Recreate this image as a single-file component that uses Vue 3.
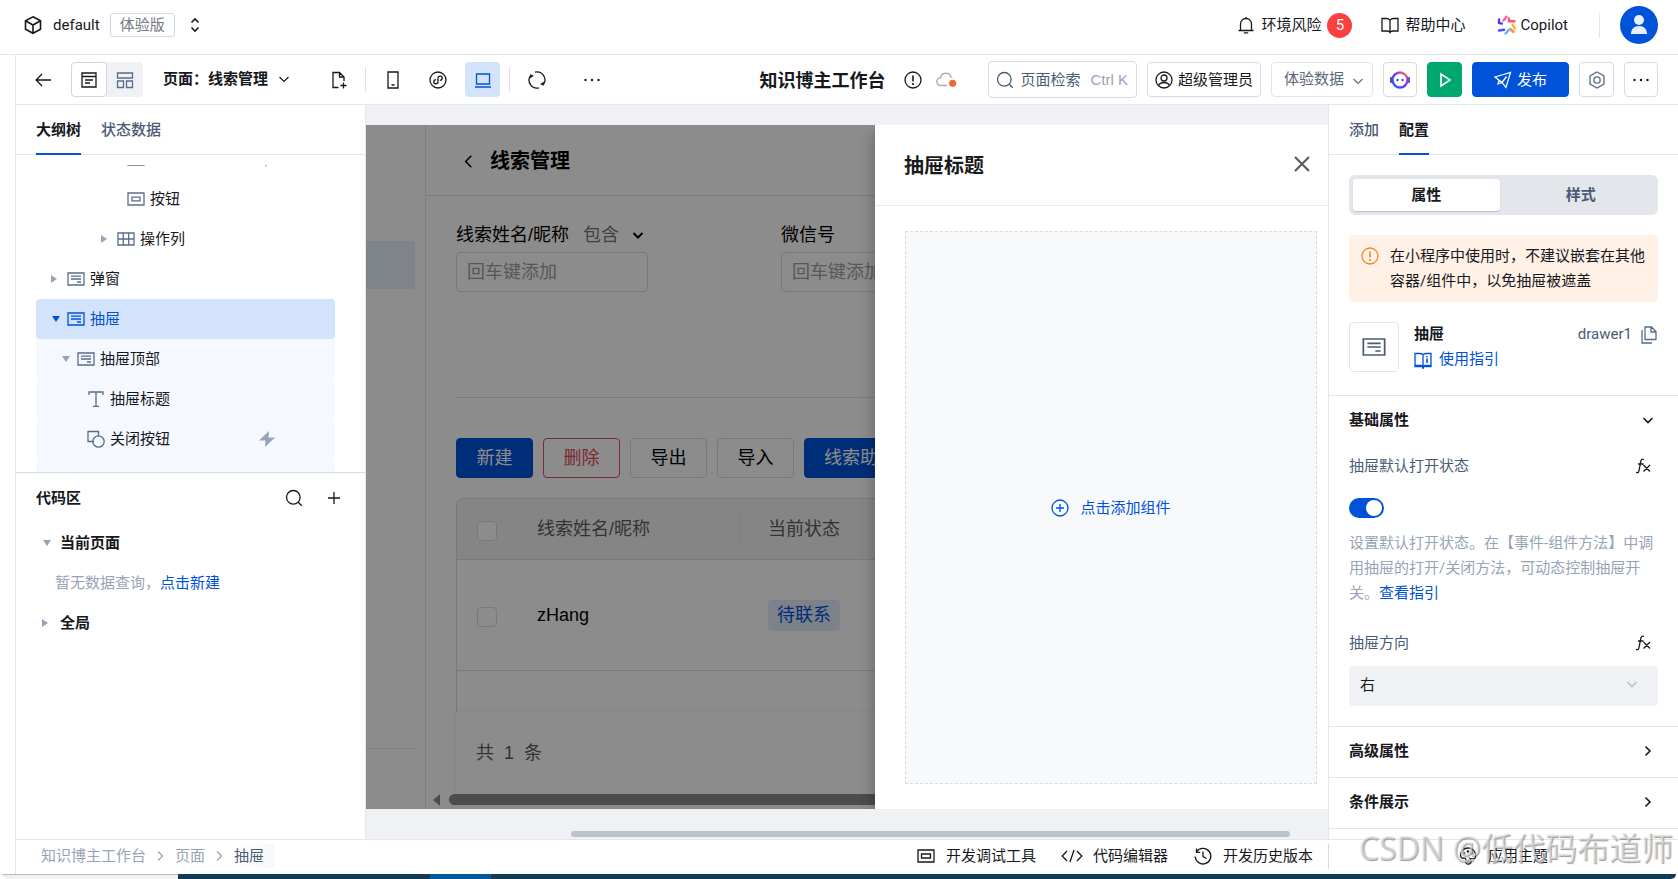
<script setup>
import { h, ref } from 'vue';

const icons = {
  cube: '<path d="M9 .8 16.500 4.800v8.500L9 17.300l-7.500-4V4.800z"/><path d="M1.800 5 9 9l7.200-4M9 9v8.300"/>',
  sort: '<path d="M5.5 6.5 9 3l3.5 3.5M5.5 11.5 9 15l3.5-3.5"/>',
  bell: '<path d="M1.500 14.500h15M3.500 14.500V8a5.500 5.500 0 0 1 11 0v6.500M9 2.500V1M6.800 16.800h4.400"/>',
  book: '<path d="M9 4v12.500M9 4C8 3 7 2.500 5.500 2.500H1v12.500h5c1.500 0 2.500.500 3 1.500.500-1 1.500-1.500 3-1.500h5V2.500h-4.500C11 2.500 10 3 9 4z"/>',
  back: '<path d="M17 9H2M8 3 2 9l6 6"/>',
  layout: '<path d="M2 2h14v14H2zM2 5.500h14M5 9h8M5 12h5"/>',
  blocks: '<path d="M1.500 2h15v5h-15zM1.500 10h6v6.500h-6zM10.500 10h6v6.500h-6z"/>',
  down: '<path d="m4.500 7 4.500 4.500L13.500 7"/>',
  right: '<path d="m6.500 4.500 4.500 4.500-4.500 4.500"/>',
  left: '<path d="M12 3 6 9l6 6"/>',
  addPage: '<path d="M8.500 16.500H3V1.500h6.500L14 6v4M9.500 1.500V6H14M13.500 11.500v6M10.500 14.500h6"/>',
  phone: '<path d="M4 1h10v16H4zM7.500 14h3"/>',
  mini: '<circle cx="9" cy="9" r="8"/><path d="M7.200 8.700c-1.400.1-2.400 1-2.400 2.100 0 1.200 1 2 2.100 2S9 12 9 10.800V7.200C9 6 10 5.200 11.100 5.200s2.100.8 2.100 2c0 1.100-1 2-2.400 2.100"/>',
  laptop: '<path d="M2.500 3h13v10h-13zM1 16h16"/>',
  refresh: '<path d="M7 1.200A8 8 0 0 1 15.500 13.500M11 16.800A8 8 0 0 1 2.500 4.500"/><path d="M15.800 10.500v4.200l-3.600-1.500zM2.200 7.500V3.300l3.600 1.500z" fill="currentColor" stroke="none"/>',
  more: '<g fill="currentColor" stroke="none"><circle cx="2.500" cy="9" r="1.200"/><circle cx="9" cy="9" r="1.200"/><circle cx="15.500" cy="9" r="1.200"/></g>',
  warn: '<circle cx="9" cy="9" r="8"/><path d="M9 4.500v6M9 12v2" stroke-width="1.600"/>',
  cloud: '<path d="M10 14H4.500a3.500 3.500 0 0 1-.5-7 5 5 0 0 1 9.800 0"/><circle cx="15" cy="12" r="3.200" fill="#ed6c2e" stroke="none"/>',
  search: '<circle cx="8.300" cy="8.300" r="6.800"/><path d="m13.200 13.200 3.600 3.600"/>',
  user: '<circle cx="9" cy="9" r="8"/><circle cx="9" cy="7" r="3"/><path d="M3.500 14.800c1-2.600 3-3.300 5.500-3.300s4.500.7 5.500 3.300"/>',
  play: '<path d="M5 3v12l9-6z"/>',
  send: '<path d="M1 6 16.500 1.500 12 16.500 8 11.500zM8 11.500l4.500-6M5.200 9 4 13l4-1.500"/>',
  gear: '<path d="M9 1 16 5v8l-7 4-7-4V5z"/><circle cx="9" cy="9" r="3.200"/>',
  btn: '<path d="M1 3h16v12H1zM5 7.200h8v3.600H5z"/>',
  grid: '<path d="M1 3h16v12H1zM1 9h16M6.300 3v12M11.700 3v12"/>',
  box: '<path d="M1 3h16v12H1zM4 6.200h10M4 9h10M10 12h4"/>',
  text: '<path d="M2 5V2h14v3M9 2v14M6 16.300h6"/>',
  shape: '<path d="M7 11.500H1V1.500h10.500v5"/><circle cx="11.500" cy="11.500" r="5.700"/>',
  bolt: '<path d="M11 1 1 10.500h6.500L7 17 17 7.500h-6.500z" fill="currentColor" stroke="none"/>',
  plus: '<path d="M9 3v12M3 9h12"/>',
  plusCircle: '<circle cx="9" cy="9" r="8"/><path d="M9 5v8M5 9h8"/>',
  close: '<path d="m2 2 14 14M16 2 2 16"/>',
  guide: '<path d="M9 3.500v12M9 3.500C8 2.800 7 2.500 5.500 2.500H1v12h5.500c1.200 0 2 .5 2.500 1 .5-.5 1.300-1 2.500-1H17v-12h-4.500c-1.500 0-2.500.3-3.500 1z"/><path d="M.4 15.500h17.200M13 7.500v4.500M13 5v1.300M8 17h2" stroke-width="1.600"/>',
  copy: '<path d="M5 1h6.500L16 5.500V13.500H5zM11 1v5h5M2 4v13h10"/>',
  fx: '<path d="M10 2.500C7.500 1.500 7 3 6.700 5L5 13.500c-.3 1.800-1 2.500-3 2M4 7h5.500M9.500 8l6.500 6.500M16 8l-6.500 6.500"/>',
  panel: '<path d="M1 3h16v12H1zM4.500 7h9v4h-9z"/>',
  code: '<path d="M4 4-.8 9 4 14M14 4l4.800 5-4.800 5M11 3 7 15"/>',
  history: '<path d="M2.500 4.800A7.800 7.800 0 1 1 1.200 9.500M2.500 1.500v3.800h3.800M9 4.500V9.500l3.500 2"/>',
  palette: '<path d="M11 11.500c1 .5 2.500.5 4 .3C17 11 17.200 8 16 5.500 14.500 2.800 12 1 9 1 4.800 1 1.500 4.300 1.500 8c0 2.200 1.500 3.500 3.500 3.200 1.500-.2 2.200.8 1.800 2-.5 2 .4 4 2.500 4s3.200-1.600 2.700-3.200c-.3-1-.6-1.700-1-2.500z"/><g fill="currentColor"><circle cx="5" cy="6.500" r=".7"/><circle cx="9" cy="4.500" r=".7"/><circle cx="13" cy="6.500" r=".7"/><circle cx="9.300" cy="14" r=".5"/></g>'
};

const Icon = (props) => h('svg', {
  class: 'icon', viewBox: '0 0 18 18', 'aria-hidden': 'true', innerHTML: icons[props.name]
});
Icon.props = ['name'];

const treeRows = [
  { label: '', icon: 'btn', level: 6, bolt: true },
  { label: '按钮', icon: 'btn', level: 6 },
  { label: '操作列', icon: 'grid', level: 5, caret: 'closed' },
  { label: '弹窗', icon: 'box', level: 0, caret: 'closed' },
  { label: '抽屉', icon: 'box', level: 0, caret: 'open', active: true },
  { label: '抽屉顶部', icon: 'box', level: 1, caret: 'open', child: true },
  { label: '抽屉标题', icon: 'text', level: 2, child: true },
  { label: '关闭按钮', icon: 'shape', level: 2, child: true, bolt: true },
  { label: '', level: 1, child: true }
];

const defaultOpen = ref(true);
const direction = ref('右');
</script>

<template>
  <div class="app">
    <header class="topbar">
      <Icon name="cube" />
      <span class="env-name">default</span>
      <span class="env-tag">体验版</span>
      <button class="plain env-switch" aria-label="切换环境"><Icon name="sort" /></button>
      <nav class="top-links">
        <a href="#" class="top-link risk"><Icon name="bell" />环境风险<span class="count">5</span></a>
        <a href="#" class="top-link help"><Icon name="book" />帮助中心</a>
        <a href="#" class="top-link copilot">
          <svg class="icon" viewBox="0 0 20 20" aria-hidden="true">
            <g stroke-width="2.400" stroke-linecap="round">
              <path d="M2 4.500v3.300l2.800.8" stroke="#4a3df5" />
              <path d="M2 15.500l5-.7" stroke="#4452ff" />
              <path d="M6.500 5.500 9.500 1.800" stroke="#ff5fa8" />
              <path d="M12 3.500v2.800h5.500" stroke="#f25a7c" />
              <path d="M15.500 9.500l2.200 4" stroke="#ffab2e" />
              <path d="M13.300 14l3.200 3" stroke="#ff8f45" />
              <path d="M8.500 18.500l3.500-3.700" stroke="#58b4ff" />
            </g>
          </svg>Copilot
        </a>
      </nav>
      <span class="top-divider"></span>
      <button class="avatar" aria-label="账号">
        <svg viewBox="0 0 38 38" aria-hidden="true">
          <circle cx="19" cy="14" r="5" />
          <path d="M11 28c0-5 3-8 8-8s8 3 8 8z" />
        </svg>
      </button>
    </header>

    <div class="workspace">
      <div class="toolbar">
        <button class="plain" aria-label="返回"><Icon name="back" /></button>
        <div class="view-switch">
          <button class="view on" aria-label="页面视图"><Icon name="layout" /></button>
          <button class="view" aria-label="布局视图"><Icon name="blocks" /></button>
        </div>
        <button class="plain page-switch">页面：线索管理<Icon name="down" /></button>
        <button class="plain add-page" aria-label="新建页面"><Icon name="addPage" /></button>
        <span class="bar"></span>
        <div class="devices">
          <button class="device" aria-label="手机"><Icon name="phone" /></button>
          <button class="device" aria-label="小程序"><Icon name="mini" /></button>
          <button class="device on" aria-label="电脑"><Icon name="laptop" /></button>
        </div>
        <span class="bar"></span>
        <button class="plain reload" aria-label="刷新"><Icon name="refresh" /></button>
        <button class="plain extra" aria-label="更多"><Icon name="more" /></button>

        <h1 class="app-title">知识博主工作台</h1>
        <Icon name="warn" class="title-warn" />
        <Icon name="cloud" class="title-cloud" />
        <div class="actions">
          <button class="tool search"><Icon name="search" />页面检索<kbd>Ctrl K</kbd></button>
          <button class="tool role"><Icon name="user" />超级管理员</button>
          <div class="data-wrap">
            <select class="data-select" aria-label="数据环境"><option>体验数据</option></select>
            <Icon name="down" />
          </div>
          <button class="tool square narrow" aria-label="助手">
            <svg class="bot" viewBox="0 0 20 18" aria-hidden="true">
              <defs>
                <linearGradient id="bot" x1="0" y1="1" x2="1" y2="0">
                  <stop offset="0" stop-color="#1a6bff" />
                  <stop offset=".5" stop-color="#6a35f5" />
                  <stop offset="1" stop-color="#ff7a59" />
                </linearGradient>
              </defs>
              <circle cx="10" cy="9" r="7.500" fill="none" stroke="url(#bot)" stroke-width="2.400" />
              <rect x="0" y="6" width="3" height="6" rx="1" fill="#2f55f7" />
              <rect x="17" y="6" width="3" height="6" rx="1" fill="#8a3be8" />
              <circle cx="7.500" cy="9" r="1.200" fill="#5a3bf5" />
              <circle cx="12.500" cy="9" r="1.200" fill="#5a3bf5" />
            </svg>
          </button>
          <button class="tool square run" aria-label="预览"><Icon name="play" /></button>
          <button class="tool publish"><Icon name="send" />发布</button>
          <button class="tool square muted" aria-label="设置"><Icon name="gear" /></button>
          <button class="tool square narrow" aria-label="更多操作"><Icon name="more" /></button>
        </div>
      </div>

      <div class="body">
        <aside class="outline">
          <div class="tabs">
            <button class="tab on">大纲树</button>
            <button class="tab">状态数据</button>
          </div>
          <div class="tree">
            <ul>
              <li
                v-for="(row, i) in treeRows"
                :key="i"
                class="row"
                :class="{ active: row.active, child: row.child }"
                :style="{ paddingLeft: 14 + row.level * 10 + 'px' }"
              >
                <span class="caret" :class="row.caret"></span>
                <Icon v-if="row.icon" :name="row.icon" />
                <span class="row-label">{{ row.label }}</span>
                <Icon v-if="row.bolt" name="bolt" class="bolt" />
              </li>
            </ul>
          </div>
          <section class="code">
            <div class="code-head">
              <h2>代码区</h2>
              <button class="plain" aria-label="搜索"><Icon name="search" /></button>
              <button class="plain" aria-label="新增"><Icon name="plus" /></button>
            </div>
            <div class="code-row"><span class="caret open"></span>当前页面</div>
            <p class="code-empty">暂无数据查询，<a href="#">点击新建</a></p>
            <div class="code-row"><span class="caret closed"></span>全局</div>
          </section>
        </aside>

        <main class="canvas">
          <div class="stage">
            <div class="preview">
              <div class="side">
                <div class="side-item"></div>
              </div>
              <div class="page">
                <div class="page-head"><Icon name="left" /><h2>线索管理</h2></div>
                <div class="page-body">
                  <div class="filters">
                    <div class="filter">
                      <div class="filter-label">
                        <label for="lead-name">线索姓名/昵称</label>
                        <button class="match">包含<Icon name="down" /></button>
                      </div>
                      <input id="lead-name" placeholder="回车键添加">
                    </div>
                    <div class="filter">
                      <div class="filter-label"><label for="wechat">微信号</label></div>
                      <input id="wechat" placeholder="回车键添加">
                    </div>
                  </div>
                  <div class="ops">
                    <button class="op primary">新建</button>
                    <button class="op danger">删除</button>
                    <button class="op">导出</button>
                    <button class="op">导入</button>
                    <button class="op primary">线索助手</button>
                  </div>
                  <div class="table-wrap">
                    <table>
                      <thead>
                        <tr>
                          <th class="check"><input type="checkbox" aria-label="全选"></th>
                          <th class="name">线索姓名/昵称</th>
                          <th>当前状态</th>
                        </tr>
                      </thead>
                      <tbody>
                        <tr>
                          <td class="check"><input type="checkbox" aria-label="选择 zHang"></td>
                          <td class="name">zHang</td>
                          <td><span class="status">待联系</span></td>
                        </tr>
                      </tbody>
                    </table>
                  </div>
                  <div class="pager"><span>共</span><span>1</span><span>条</span></div>
                </div>
                <div class="hscroll"><span class="hscroll-arrow"></span><span class="hscroll-thumb"></span></div>
              </div>
            </div>
            <div class="mask"></div>
            <section class="drawer">
              <div class="drawer-head">
                <h2>抽屉标题</h2>
                <button class="plain" aria-label="关闭"><Icon name="close" /></button>
              </div>
              <button class="slot"><Icon name="plusCircle" />点击添加组件</button>
            </section>
          </div>
          <div class="canvas-scroll"></div>
        </main>

        <aside class="config">
          <div class="tabs">
            <button class="tab">添加</button>
            <button class="tab on">配置</button>
          </div>
          <div class="config-scroll">
            <div class="config-intro">
              <div class="seg">
                <button class="on">属性</button>
                <button>样式</button>
              </div>
              <div class="alert">
                <Icon name="warn" />
                <p>在小程序中使用时，不建议嵌套在其他容器/组件中，以免抽屉被遮盖</p>
              </div>
              <div class="comp">
                <div class="comp-icon"><Icon name="box" /></div>
                <div class="comp-info">
                  <strong>抽屉</strong>
                  <a href="#"><Icon name="guide" />使用指引</a>
                </div>
                <span class="comp-id">drawer1</span>
                <button class="plain copy" aria-label="复制"><Icon name="copy" /></button>
              </div>
            </div>
            <section class="group">
              <h3>基础属性<Icon name="down" /></h3>
              <div class="field-label"><label for="default-open">抽屉默认打开状态</label><Icon name="fx" /></div>
              <input id="default-open" v-model="defaultOpen" type="checkbox" class="switch">
              <p class="tip">设置默认打开状态。在【事件-组件方法】中调用抽屉的打开/关闭方法，可动态控制抽屉开关。<a href="#">查看指引</a></p>
              <div class="field-label second"><label for="direction">抽屉方向</label><Icon name="fx" /></div>
              <div class="select-wrap">
                <select id="direction" v-model="direction">
                  <option>右</option>
                  <option>左</option>
                </select>
                <Icon name="down" />
              </div>
            </section>
            <section class="group folded"><h3>高级属性<Icon name="right" /></h3></section>
            <section class="group folded"><h3>条件展示<Icon name="right" /></h3></section>
            <section class="group folded"></section>
          </div>
        </aside>
      </div>

      <footer class="statusbar">
        <nav class="crumbs">
          <a href="#">知识博主工作台</a><Icon name="right" />
          <a href="#">页面</a><Icon name="right" />
          <span class="here">抽屉</span>
        </nav>
        <button class="plain"><Icon name="panel" />开发调试工具</button>
        <button class="plain"><Icon name="code" class="wide" />代码编辑器</button>
        <button class="plain"><Icon name="history" />开发历史版本</button>
        <div class="theme"><button class="plain"><Icon name="palette" />应用主题</button></div>
      </footer>
    </div>

    <div class="taskbar"><span class="task-light"></span><span class="task-dark"></span><span class="task-blue"></span><span class="task-rest"></span></div>
    <div class="watermark">CSDN @低代码布道师</div>
  </div>
</template>

<style>
body { margin: 0; background: #fff; }
</style>

<style scoped>
* { box-sizing: border-box; }

.app {
  position: relative;
  display: flex;
  flex-direction: column;
  height: 100vh;
  overflow: hidden;
  font-family: Roboto, "Noto Sans CJK SC", sans-serif;
  font-size: 15px;
  line-height: 24px;
  color: #16181d;
}

button, select, input { font: inherit; color: inherit; margin: 0; }
button { padding: 0; cursor: pointer; }
h1, h2, h3, p, ul { margin: 0; padding: 0; }
a { color: #0052d9; text-decoration: none; }

.icon {
  width: 18px;
  height: 18px;
  flex: none;
  fill: none;
  stroke: currentColor;
  stroke-width: 1.3;
  overflow: visible;
}

.plain { display: flex; align-items: center; border: 0; background: none; }

/* top bar */
.topbar {
  display: flex;
  align-items: center;
  height: 55px;
  flex: none;
  padding: 0 20px 4px 24px;
  border-bottom: 1px solid #e3e6eb;
}
.topbar > .icon, .env-switch .icon { stroke-width: 1.6; }
.env-name { margin-left: 11px; }
.env-tag {
  margin-left: 10px;
  padding: 0 9px;
  height: 24px;
  line-height: 22px;
  border: 1px solid #d5d8e0;
  border-radius: 3px;
  color: #777b84;
}
.env-switch { margin-left: 11px; }
.top-links { display: flex; margin-left: auto; }
.top-link { display: flex; align-items: center; color: #16181d; }
.risk { gap: 6px; }
.help { gap: 6px; margin-left: 29px; }
.copilot { gap: 4px; margin-left: 31px; }
.copilot .icon { width: 20px; height: 20px; }
.count {
  width: 25px;
  height: 25px;
  line-height: 25px;
  border-radius: 50%;
  text-align: center;
  color: #fff;
  background: #fa4040;
}
.top-divider { width: 1px; height: 25px; margin: 0 20px 0 31px; background: #e3e6eb; }
.avatar { width: 38px; height: 38px; border: 0; border-radius: 50%; background: #0052d9; }
.avatar svg { display: block; fill: #e6eeff; }

/* toolbar */
.workspace {
  display: flex;
  flex-direction: column;
  flex: 1;
  min-height: 0;
  margin-left: 15px;
  border-left: 1px solid #e3e6eb;
}
.toolbar {
  display: flex;
  align-items: center;
  flex: none;
  height: 50px;
  padding: 0 20px 0 18px;
  border-bottom: 1px solid #e3e6eb;
}
.view-switch { display: flex; margin-left: 19px; border-radius: 4px; background: #eff1f5; }
.view {
  display: flex;
  align-items: center;
  justify-content: center;
  width: 36px;
  height: 35px;
  border: 1px solid transparent;
  border-radius: 4px;
  background: none;
  color: #5a6c8c;
}
.view.on { border-color: #cfd6e0; background: #fff; color: #16181d; }
.page-switch { gap: 7px; margin-left: 20px; padding-bottom: 2px; font-weight: 700; }
.page-switch .icon { stroke-width: 1.2; }
.add-page { margin: 0 17px 0 37px; }
.bar { width: 1px; height: 25px; background: #dcdfe5; }
.devices { display: flex; gap: 10px; margin: 0 9px 0 9px; }
.device {
  display: flex;
  align-items: center;
  justify-content: center;
  width: 35px;
  height: 35px;
  border: 0;
  border-radius: 4px;
  background: none;
}
.device.on { background: #d4e3fc; color: #0052d9; }
.reload { margin-left: 18px; }
.extra { margin-left: 37px; }
.app-title { margin-left: auto; padding-top: 2px; font-size: 18px; font-weight: 700; white-space: nowrap; }
.title-warn { margin-left: 19px; }
.title-cloud { width: 20px; height: 20px; margin: 0 32px 0 14px; color: #a3b0c6; }
.actions { display: flex; align-items: center; gap: 10px; }
.tool {
  display: flex;
  align-items: center;
  justify-content: center;
  height: 35px;
  border: 1px solid #d5dae3;
  border-radius: 4px;
  background: #fff;
  white-space: nowrap;
}
.search { height: 37px; gap: 6px; padding: 0 8px 0 7px; color: #4b5b76; }
.search kbd { margin-left: 4px; font-family: "Liberation Sans", sans-serif; font-size: 15px; color: #97a3b7; }
.role { gap: 5px; padding: 0 7px; }
.data-wrap { position: relative; color: #5e6879; }
.data-select {
  width: 102px;
  height: 35px;
  padding: 0 12px 2px;
  border: 1px solid #e1e4ea;
  border-radius: 4px;
  background: #fff;
  appearance: none;
}
.data-wrap .icon { position: absolute; right: 6px; top: 10px; stroke-width: 1.1; pointer-events: none; }
.square { width: 35px; }
.square.narrow { width: 34px; }
.bot { width: 20px; height: 18px; }
.run { border-color: #00a870; background: #00a870; color: #fff; }
.run .icon { stroke-width: 1.6; }
.publish { gap: 5px; width: 97px; border-color: #0052d9; background: #0052d9; color: #fff; }
.muted { color: #5a6c8c; }

/* panels */
.body { display: flex; flex: 1; min-height: 0; }
.tabs {
  display: flex;
  flex: none;
  gap: 20px;
  height: 50px;
  padding: 0 20px;
  border-bottom: 1px solid #e3e6eb;
}
.tab {
  height: 50px;
  padding: 2px 0 0;
  border: 0;
  border-bottom: 2px solid transparent;
  background: none;
  font-weight: 500;
  color: #4b5b76;
}
.tab.on { border-color: #0052d9; color: #16181d; font-weight: 700; }

.outline {
  display: flex;
  flex-direction: column;
  flex: none;
  width: 350px;
  border-right: 1px solid #e3e6eb;
}
.tree { height: 307px; margin-top: 10px; overflow: hidden; flex: none; }
.tree ul { margin-top: -26px; padding: 0 30px 0 20px; list-style: none; }
.row {
  display: flex;
  align-items: center;
  height: 40px;
  border-radius: 4px;
}
.row .icon { color: #5a6c8c; }
.row.child { background: #f5f8ff; }
.row.active, .row.active .icon { color: #0052d9; }
.row.active { background: #d4e3fc; }
.row-label { margin-left: 5px; }
.row .bolt { margin-left: auto; margin-right: 59px; color: #97a3b7; }
.caret { width: 17px; flex: none; }
.caret::before {
  content: "";
  display: block;
  width: 0;
  margin-left: 1px;
  border: 4px solid transparent;
}
.caret.closed::before { border-left: 6px solid #97a3b7; border-right: 0; }
.caret.open::before { margin-left: 2px; border-width: 6px 4px 0; border-top-color: #97a3b7; }
.row.active .caret.open::before { border-top-color: #0052d9; }

.code { flex: 1; padding: 0 20px; border-top: 1px solid #d5dae3; }
.code-head { display: flex; align-items: center; height: 50px; padding-right: 2px; }
.code-head h2 { flex: 1; font-size: 15px; font-weight: 700; }
.code-head .plain { margin-left: 22px; }
.code-row { display: flex; align-items: center; height: 40px; padding-left: 5px; font-weight: 700; }
.code-row .caret { width: 19px; }
.code-empty { height: 40px; line-height: 40px; padding-left: 19px; color: #97a3b7; }

/* canvas */
.canvas {
  display: flex;
  flex-direction: column;
  flex: 1;
  min-width: 0;
  padding-top: 20px;
  background: #f0f1f5;
}
.stage { position: relative; flex: 1; min-height: 0; overflow: hidden; }
.preview {
  display: flex;
  height: 100%;
  background: #fff;
  font-family: "Liberation Sans", "Noto Sans CJK SC", sans-serif;
  font-size: 18px;
  color: #000;
}
.side {
  flex: none;
  width: 60px;
  padding: 116px 10px 60px 0;
  border-right: 1px solid #e7e7e7;
  display: flex;
  flex-direction: column;
}
.side-item { height: 48px; border-radius: 0 4px 4px 0; background: #e8eefc; }
.side::after { content: ""; margin-top: auto; border-top: 1px solid #e7e7e7; }
.page { display: flex; flex-direction: column; flex: 1; min-width: 0; }
.page-head {
  display: flex;
  align-items: center;
  gap: 13px;
  height: 71px;
  flex: none;
  padding: 2px 34px 0;
  border-bottom: 1px solid #dcdcdc;
}
.page-head h2 { font-size: 20px; }
.page-head .icon { width: 17px; height: 17px; stroke-width: 1.6; }
.page-body { display: flex; flex-direction: column; flex: 1; min-height: 0; padding-left: 30px; }
.filters {
  display: flex;
  gap: 133px;
  padding: 24px 0 105px;
  border-bottom: 1px solid #e0e0e0;
}
.filter { width: 192px; }
.filter-label { display: flex; align-items: center; height: 30px; margin-bottom: 2px; white-space: nowrap; }
.match { display: flex; align-items: center; gap: 10px; margin-left: 14px; border: 0; background: none; color: #777; }
.match .icon { color: #000; stroke-width: 2; }
.filter input {
  width: 100%;
  height: 40px;
  padding: 0 10px;
  border: 1px solid #dcdcdc;
  border-radius: 4px;
  background: #fff;
}
.filter input::placeholder { color: #a0a0a0; opacity: 1; }
.ops { display: flex; gap: 10px; margin-top: 40px; }
.op {
  min-width: 77px;
  height: 40px;
  padding: 0 19px;
  border: 1px solid #dcdcdc;
  border-radius: 4px;
  background: #fff;
}
.op.primary { border-color: #0052d9; background: #0052d9; color: #fff; }
.op.danger { border-color: #e34d59; color: #e34d59; }
.table-wrap {
  flex: 1;
  min-height: 0;
  margin-top: 20px;
  overflow: hidden;
  border: 1px solid #dcdcdc;
  border-bottom: 0;
  border-radius: 8px 0 0 0;
}
table { width: 100%; border-collapse: separate; border-spacing: 0; table-layout: fixed; }
th, td { padding: 0 27px; border-bottom: 1px solid #dcdcdc; text-align: left; }
th { position: relative; height: 61px; background: #f3f3f3; font-weight: 400; color: #5e5e5e; }
td { height: 111px; }
th.name::after {
  content: "";
  position: absolute;
  right: 0;
  top: 14px;
  height: 32px;
  border-right: 1px solid #e3e3e3;
}
.check { width: 60px; padding: 4px 20px 0; }
.name { width: 224px; padding: 0 20px; }
.check input {
  display: block;
  width: 20px;
  height: 20px;
  border: 1px solid #dcdcdc;
  border-radius: 4px;
  background: #fff;
  appearance: none;
}
.status {
  display: inline-block;
  height: 31px;
  line-height: 31px;
  padding: 0 9px;
  border-radius: 4px;
  background: #e3ebfb;
  color: #0052d9;
}
.pager {
  display: flex;
  align-items: center;
  gap: 10px;
  flex: none;
  height: 82px;
  padding: 0 20px;
  box-shadow: 0 0 4px rgba(0, 0, 0, 0.08);
  color: #5e5e5e;
}
.hscroll { display: flex; align-items: center; gap: 9px; flex: none; height: 15px; padding: 0 0 4px 7px; }
.hscroll-arrow { border: 6px solid transparent; border-left: 0; border-right: 7px solid #8b8b8b; }
.hscroll-thumb { flex: 1; height: 11px; border-radius: 6px; background: #8b8b8b; }
.mask { position: absolute; inset: 0; background: rgba(0, 0, 0, 0.45); }
.drawer {
  position: absolute;
  top: 0;
  right: 0;
  bottom: 0;
  display: flex;
  flex-direction: column;
  width: 453px;
  background: #fff;
  box-shadow: 0 8px 14px rgba(0, 0, 0, 0.3);
}
.drawer-head {
  display: flex;
  align-items: center;
  justify-content: space-between;
  flex: none;
  height: 81px;
  padding: 0 17px 0 29px;
  border-bottom: 1px solid #ebebeb;
}
.drawer-head h2 { padding-top: 2px; font-size: 20px; color: #1a1a1a; }
.drawer-head .plain { padding-bottom: 2px; }
.drawer-head .icon { color: #5e5e5e; stroke-width: 2.2; }
.slot {
  display: flex;
  align-items: center;
  justify-content: center;
  gap: 11px;
  flex: 1;
  margin: 25px 11px 25px 30px;
  border: 1px dashed #dcdcdc;
  background: #f8f9fb;
  color: #0052d9;
}
.canvas-scroll { height: 6px; flex: none; margin: 22px 38px 2px 205px; border-radius: 3px; background: #bac3ce; }

/* config panel */
.config {
  display: flex;
  flex-direction: column;
  flex: none;
  width: 350px;
  border-left: 1px solid #e3e6eb;
}
.config-scroll { flex: 1; min-height: 0; overflow: hidden; }
.config-intro { padding: 20px 20px 23px; }
.seg { display: flex; gap: 8px; height: 40px; padding: 4px; border-radius: 6px; background: #e3e6eb; }
.seg button { flex: 1; height: 32px; border: 0; border-radius: 3px; background: none; font-weight: 700; color: #4b5b76; }
.seg .on { background: #fff; color: #16181d; box-shadow: 0 1px 1px #b8c0cc; }
.alert {
  display: flex;
  gap: 11px;
  margin: 20px 0;
  padding: 9px 8px 8px 12px;
  border-radius: 4px;
  background: #fff1e5;
  line-height: 25px;
}
.alert .icon { margin-top: 3px; color: #f5831f; }
.comp { display: flex; align-items: flex-start; }
.comp-icon {
  display: flex;
  align-items: center;
  justify-content: center;
  width: 50px;
  height: 50px;
  margin-right: 15px;
  border: 1px solid #e3e6eb;
  border-radius: 4px;
}
.comp-icon .icon { width: 24px; height: 24px; color: #4b5b76; }
.comp-info { flex: 1; line-height: 25px; }
.comp-info strong { display: block; font-weight: 700; }
.comp-info a { display: flex; align-items: center; gap: 7px; }
.comp-id { color: #4b5b76; }
.copy { height: 26px; margin-left: 8px; color: #5a6c8c; }
.group { padding: 0 20px 20px; border-top: 1px solid #e3e6eb; }
.group.folded { padding-bottom: 0; min-height: 51px; }
.group h3 {
  display: flex;
  align-items: center;
  justify-content: space-between;
  height: 48px;
  padding-right: 1px;
  font-size: 15px;
  font-weight: 700;
}
.group h3 .icon { stroke-width: 1.6; }
.field-label {
  display: flex;
  align-items: center;
  justify-content: space-between;
  height: 44px;
  padding-right: 6px;
  color: #4b5b76;
}
.field-label .icon { color: #16181d; }
.field-label.second { height: 40px; margin-top: 17px; }
.switch {
  display: flow-root;
  width: 35px;
  height: 20px;
  margin: 10px 0 13px;
  padding-top: 2px;
  border-radius: 10px;
  background: #c5c9d1;
  appearance: none;
}
.switch::before {
  content: "";
  display: block;
  width: 16px;
  height: 16px;
  margin-left: 2px;
  border-radius: 50%;
  background: #fff;
}
.switch:checked { background: #0052d9; }
.switch:checked::before { margin-left: 17px; }
.tip { line-height: 25px; color: #97a3b7; }
.select-wrap { position: relative; margin-top: 3px; }
.select-wrap select {
  width: 100%;
  height: 40px;
  padding: 0 11px 2px;
  border: 0;
  border-radius: 4px;
  background: #f0f1f5;
  appearance: none;
}
.select-wrap .icon { position: absolute; right: 17px; top: 9px; color: #b5bcc8; pointer-events: none; }

/* status bar */
.statusbar {
  display: flex;
  align-items: center;
  flex: none;
  height: 35px;
  padding-bottom: 2px;
  border-top: 1px solid #e3e6eb;
}
.statusbar .plain { gap: 11px; margin-right: 26px; }
.statusbar .wide { width: 20px; }
.crumbs { display: flex; align-items: center; gap: 5px; flex: 1; padding-left: 25px; color: #97a3b7; }
.crumbs .icon { width: 19px; }
.crumbs a { color: #97a3b7; }
.here { padding-right: 10px; color: #4b5b76; background: linear-gradient(90deg, #fff, #f7f8fa); }
.theme {
  display: flex;
  justify-content: center;
  width: 350px;
  height: 25px;
  margin-left: -11px;
  border-left: 1px solid #d5dae3;
}
.theme .plain { margin: 0; }

.taskbar { display: flex; flex: none; height: 5px; padding: 0 2px; }
.task-light { width: 176px; border-top: 1px solid #b9bbbf; border-radius: 0 0 0 6px; background: #f0f1f5; }
.task-dark { width: 252px; background: #103a55; }
.task-blue { width: 61px; background: #045897; }
.task-rest { flex: 1; border-radius: 0 0 8px 0; background: #103a55; }

.watermark {
  position: absolute;
  right: 5px;
  bottom: 7px;
  font-family: "Noto Sans", "Noto Sans CJK SC", sans-serif;
  font-size: 32px;
  line-height: 48px;
  color: rgba(235, 235, 235, 0.6);
  text-shadow: 1px 1px 1px rgba(90, 90, 90, 0.6);
  pointer-events: none;
}
</style>
